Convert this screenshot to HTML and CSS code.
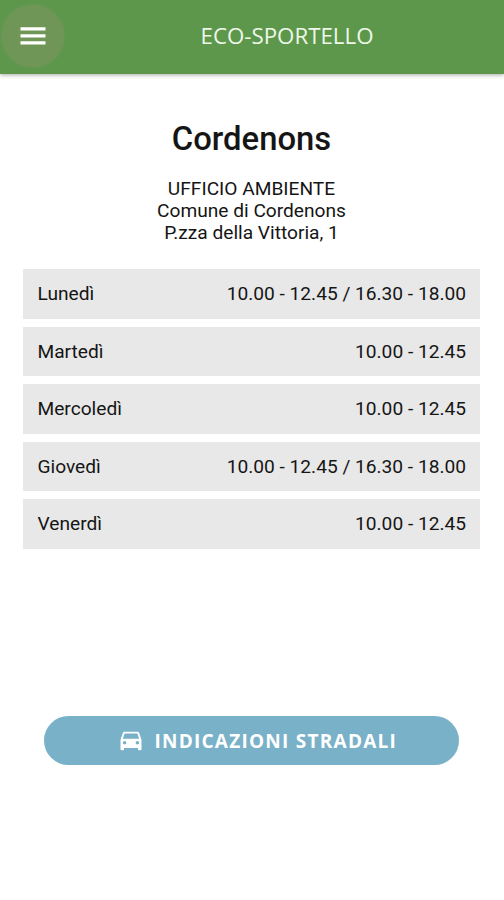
FILE: index.html
```html
<!DOCTYPE html>
<html lang="it">
<head>
<meta charset="utf-8">
<title>Eco-sportello</title>
<link rel="stylesheet" href="styles.css">
</head>
<body>
<header class="toolbar">
  <button class="menu" aria-label="Menu"><svg width="26" height="18" viewBox="0 0 26 18"><path d="M.5.2h25v3.2H.5zM.5 7.2h25v3.2H.5zM.5 14.2h25v3.2H.5z"/></svg></button>
  <span class="toolbar-title">ECO-SPORTELLO</span>
</header>
<main>
  <h1>Cordenons</h1>
  <p class="address"><span>UFFICIO AMBIENTE</span><br><span>Comune di Cordenons</span><br><span>P.zza della Vittoria, 1</span></p>
  <ul class="hours">
    <li><span>Lunedì</span><span>10.00 - 12.45 / 16.30 - 18.00</span></li>
    <li><span>Martedì</span><span>10.00 - 12.45</span></li>
    <li><span>Mercoledì</span><span>10.00 - 12.45</span></li>
    <li><span>Giovedì</span><span>10.00 - 12.45 / 16.30 - 18.00</span></li>
    <li><span>Venerdì</span><span>10.00 - 12.45</span></li>
  </ul>
  <button class="directions"><svg width="28" height="28" viewBox="0 0 24 24"><path d="M18.92 5.01C18.72 4.42 18.16 4 17.5 4h-11c-.66 0-1.21.42-1.42 1.01L3 11v8c0 .55.45 1 1 1h1c.55 0 1-.45 1-1v-1h12v1c0 .55.45 1 1 1h1c.55 0 1-.45 1-1v-8l-2.08-5.99zM6.5 15c-.83 0-1.5-.67-1.5-1.5S5.67 12 6.5 12s1.5.67 1.5 1.5S7.33 15 6.5 15zm11 0c-.83 0-1.5-.67-1.5-1.5s.67-1.5 1.5-1.5 1.5.67 1.5 1.5-.67 1.5-1.5 1.5zM5 10l1.5-4.5h11L19 10H5z"/></svg><span>INDICAZIONI STRADALI</span></button>
</main>
</body>
</html>
```
FILE: styles.css
```css
* { box-sizing: border-box; }
body { margin: 0; height: 900px; overflow: hidden; background: #fff; color: #151515; font-family: Roboto, sans-serif; }
button { border: 0; padding: 0; font: inherit; }
svg { display: block; fill: currentColor; flex: none; }
.toolbar { display: flex; align-items: center; height: 73.5px; padding-bottom: 1.5px; background: #5d974b; color: #fff; box-shadow: 0 1px 4px rgba(0,0,0,.35); }
.menu { display: flex; align-items: center; justify-content: center; width: 66px; height: 68px; background: radial-gradient(circle closest-side, #6f9657 92%, transparent); color: #fff; }
.toolbar-title { margin-left: 134.5px; color: #eef7e9; font: 22.3px/30px "Open Sans", sans-serif; white-space: nowrap; }
main { display: flex; flex-direction: column; align-items: center; padding: 45.5px 24px 0 23px; }
h1 { margin: 0; font-size: 32.8px; line-height: 40px; font-weight: 500; }
.address { margin: 19px 0 0; font-size: 19.15px; line-height: 22px; text-align: center; }
.hours { width: 100%; margin: 25px 0 0; padding: 0; list-style: none; display: grid; gap: 8px; }
.hours li { display: flex; align-items: center; justify-content: space-between; height: 49.5px; padding: 0 14px 0 14.5px; background: #e8e8e8; font-size: 19.15px; }
.directions { display: flex; align-items: center; justify-content: center; gap: 9.5px; width: 415.5px; height: 49.5px; margin-top: 167px; padding: 1.5px 0 0 11px; border-radius: 25px; background: #79b1c8; color: #fff; font: 700 19px "Open Sans", sans-serif; letter-spacing: 1.25px; }
```
